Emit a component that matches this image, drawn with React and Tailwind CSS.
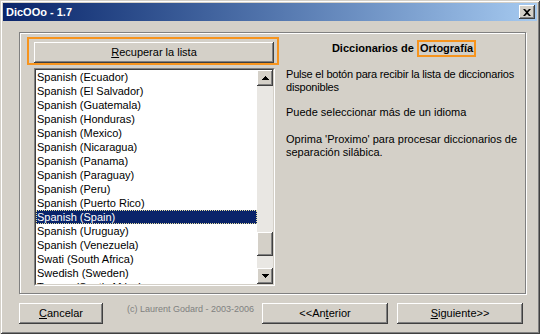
const items = [
  'Spanish (Ecuador)',
  'Spanish (El Salvador)',
  'Spanish (Guatemala)',
  'Spanish (Honduras)',
  'Spanish (Mexico)',
  'Spanish (Nicaragua)',
  'Spanish (Panama)',
  'Spanish (Paraguay)',
  'Spanish (Peru)',
  'Spanish (Puerto Rico)',
  'Spanish (Spain)',
  'Spanish (Uruguay)',
  'Spanish (Venezuela)',
  'Swati (South Africa)',
  'Swedish (Sweden)',
  'Tsonga (South Africa)',
]

const raised = 'bg-[#d4d0c8] shadow-[inset_-1px_-1px_0_#404040,inset_1px_1px_0_#fff,inset_-2px_-2px_0_#808080]'

function Arrow({ down }) {
  return (
    <svg width="7" height="4" viewBox="0 0 7 4" className={down ? 'rotate-180' : ''}>
      <path d="M3 0h1v1h1v1h1v1h1v1H0V3h1V2h1V1h1z" fill="#000" />
    </svg>
  )
}

function Btn({ className, children }) {
  return (
    <div className={`h-[21px] flex items-center justify-center text-[11px] text-black ${raised} ${className}`}>
      {children}
    </div>
  )
}

export default function App() {
  return (
    <div className="w-[540px] h-[334px] bg-[#d4d0c8] p-[3px] font-['Liberation_Sans',Arial,sans-serif] shadow-[inset_1px_1px_0_#d4d0c8,inset_-1px_-1px_0_#404040,inset_2px_2px_0_#fff,inset_-2px_-2px_0_#808080] overflow-hidden">
      {/* Title bar */}
      <div className="h-[18px] flex items-center justify-between pl-[3px] pr-[2px] bg-gradient-to-r from-[#0a246a] to-[#a6caf0]">
        <span className="text-white text-[11px] font-bold leading-none">DicOOo - 1.7</span>
        <div className={`w-[16px] h-[14px] flex items-center justify-center ${raised}`}>
          <svg width="8" height="7" viewBox="0 0 8 7">
            <path d="M0 0h2l2 2 2-2h2L5 3.5 8 7H6L4 5 2 7H0l3-3.5z" fill="#000" />
          </svg>
        </div>
      </div>

      {/* Group box */}
      <div className="ml-[16px] mt-[11px] w-[507px] h-[262px] border border-[#808080] shadow-[inset_1px_1px_0_#fff,1px_1px_0_#fff] flex">
        <div className="relative ml-[14px] mt-[9px] w-[241px]">
          <Btn className="w-[240px] h-[20px]">
            <span><u>R</u>ecuperar la lista</span>
          </Btn>
          <div className="absolute left-[-7px] top-[-5px] w-[252px] h-[28px] border-2 border-[#f7941d]" />

          {/* List */}
          <div className="mt-[5px] h-[218px] flex bg-white border-t border-l border-[#808080] border-b border-r border-b-white border-r-white">
            <div className="flex-1 flex border-t border-l border-[#404040] border-b border-r border-b-[#d4d0c8] border-r-[#d4d0c8]">
              <div className="flex-1 overflow-hidden">
                {items.map((it) => (
                  <div
                    key={it}
                    className={`h-[14px] leading-[14px] text-[11px] pl-[1px] whitespace-nowrap ${
                      it === 'Spanish (Spain)'
                        ? 'bg-[#0a246a] text-white outline-1 outline-dotted outline-[#e8e0a0] -outline-offset-1'
                        : 'text-black'
                    }`}
                  >
                    {it}
                  </div>
                ))}
              </div>
              <div className="w-[16px] flex flex-col bg-[#e9e7e3]">
                <div className={`h-[16px] flex items-center justify-center ${raised}`}><Arrow /></div>
                <div className="flex-1">
                  <div className={`mt-[146px] h-[24px] ${raised}`} />
                </div>
                <div className={`h-[16px] flex items-center justify-center ${raised}`}><Arrow down /></div>
              </div>
            </div>
          </div>
        </div>

        {/* Right text */}
        <div className="ml-[11px] w-[236px] text-[11px] leading-[13px] text-black whitespace-nowrap">
          <div className="mt-[7px] text-center font-bold">
            Diccionarios de{' '}
            <span className="inline-block border-2 border-[#f7941d] px-[1px] leading-[13px]">Ortografía</span>
          </div>
          <p className="mt-[11px] tracking-[-0.2px]">Pulse el botón para recibir la lista de diccionarios<br />disponibles</p>
          <p className="mt-[12px]">Puede seleccionar más de un idioma</p>
          <p className="mt-[14px]">Oprima 'Proximo' para procesar diccionarios de<br />separación silábica.</p>
        </div>
      </div>

      {/* Footer */}
      <div className="ml-[16px] mt-[9px] flex items-center">
        <Btn className="w-[84px]"><span><u>C</u>ancelar</span></Btn>
        <span className="ml-[24px] mt-[-8px] text-[9px] text-[#808080] w-[135px]">(c) Laurent Godard - 2003-2006</span>
        <Btn className="w-[126px]"><span>&lt;&lt;An<u>t</u>erior</span></Btn>
        <Btn className="ml-[9px] w-[126px]"><span><u>S</u>iguiente&gt;&gt;</span></Btn>
      </div>
    </div>
  )
}
